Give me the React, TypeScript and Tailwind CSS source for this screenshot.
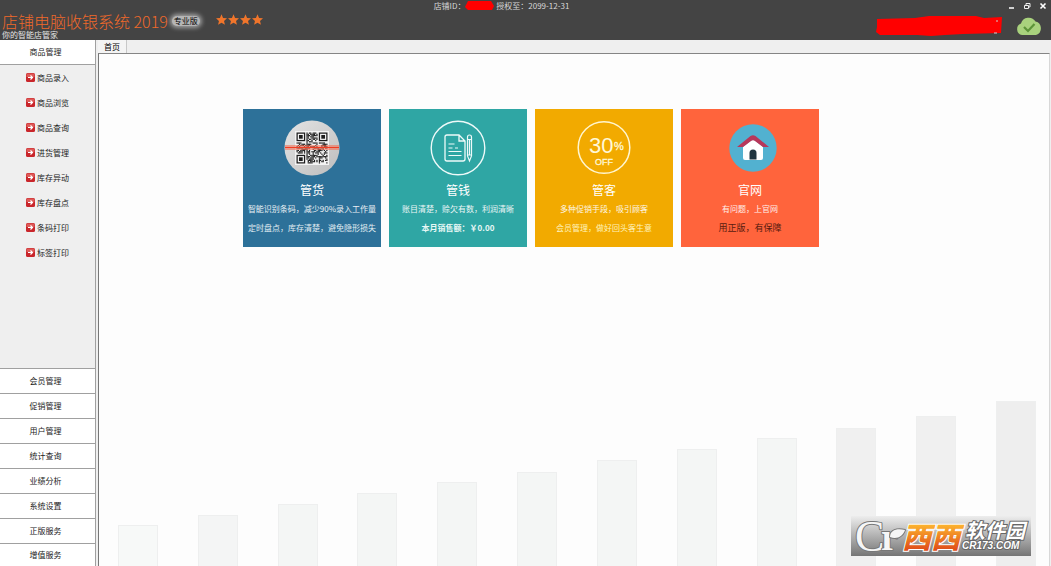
import { useState } from "react";

const goodsItems = [
  "商品录入",
  "商品浏览",
  "商品查询",
  "进货管理",
  "库存异动",
  "库存盘点",
  "条码打印",
  "标签打印",
];

const sections = [
  "会员管理",
  "促销管理",
  "用户管理",
  "统计查询",
  "业绩分析",
  "系统设置",
  "正版服务",
  "增值服务",
];

const bars = [
  { height: 41, color: "bg-[#f7f9f8]" },
  { height: 51, color: "bg-[#f4f5f5]" },
  { height: 62, color: "bg-[#f4f6f5]" },
  { height: 73, color: "bg-[#f4f6f5]" },
  { height: 84, color: "bg-[#f4f6f5]" },
  { height: 94, color: "bg-[#f4f6f5]" },
  { height: 106, color: "bg-[#f4f6f5]" },
  { height: 117, color: "bg-[#f4f6f5]" },
  { height: 128, color: "bg-[#f4f6f5]" },
  { height: 138, color: "bg-[#f0f0f0]" },
  { height: 150, color: "bg-[#f0f0f0]" },
  { height: 165, color: "bg-[#eeeeee]" },
];

const Star = () => (
  <svg width="11" height="11" viewBox="0 0 24 24" fill="#f0752b">
    <path d="M12 0.500l3.400 8 8.600.8-6.500 5.700 2 8.500L12 19l-7.500 4.500 2-8.500L0 9.300l8.600-.8z" />
  </svg>
);

const ArrowIcon = () => (
  <svg width="9" height="9" viewBox="0 0 18 18">
    <rect width="18" height="18" rx="3" fill="#c9262b" />
    <path d="M1 3a2 2 0 0 1 2-2h12a2 2 0 0 1 2 2v5H1z" fill="#de5a58" />
    <path d="M4 9h9M9 5l4 4-4 4" stroke="#fff" strokeWidth="2.400" fill="none" />
  </svg>
);

const isFinder = (x: number, y: number) =>
  (x < 8 && y < 8) || (x > 16 && y < 8) || (x < 8 && y > 16);

const QrIcon = () => {
  const cells = [];
  for (let y = 0; y < 25; y++) {
    for (let x = 0; x < 25; x++) {
      if (!isFinder(x, y) && (x * 7 + y * 13 + x * y * 5 + ((x * x) ^ (y * 3))) % 7 < 4) {
        cells.push(<rect key={`${x}-${y}`} x={x} y={y} width="1" height="1" />);
      }
    }
  }
  return (
    <svg width="56" height="56" viewBox="0 0 56 56">
      <defs>
        <linearGradient id="disc" x1="0" y1="0" x2="1" y2="1">
          <stop offset="0" stopColor="#e4e4e4" />
          <stop offset="1" stopColor="#bdbdbd" />
        </linearGradient>
      </defs>
      <circle cx="28" cy="28" r="27.500" fill="url(#disc)" />
      <rect x="11" y="11" width="34" height="34" fill="#f3f3f3" />
      <g transform="translate(12.500 12.500) scale(1.240)" fill="#1c1c1c">
        {cells}
        {[[0, 0], [18, 0], [0, 18]].map(([x, y]) => (
          <g key={`${x}-${y}`} transform={`translate(${x} ${y})`}>
            <rect width="7" height="7" />
            <rect x="1" y="1" width="5" height="5" fill="#f3f3f3" />
            <rect x="2" y="2" width="3" height="3" />
          </g>
        ))}
      </g>
      <rect x="1" y="25" width="54" height="5" fill="#f4694f" opacity=".55" />
      <rect x="1" y="27" width="54" height="1" fill="#f03c22" />
    </svg>
  );
};

const NoteIcon = () => (
  <svg width="56" height="56" viewBox="0 0 56 56" fill="none" stroke="#eefaf9">
    <circle cx="28" cy="28" r="26.800" strokeWidth="1.400" />
    <path d="M29 15H17a2 2 0 0 0-2 2v22a2 2 0 0 0 2 2h16a2 2 0 0 0 2-2V21zV21h6" strokeWidth="1.300" />
    <path d="M18.500 24h6M18.500 28h4M18.500 31.500h13M18.500 35.500h13M25 28h3" strokeWidth="1.200" />
    <path d="M37.500 17a1.800 1.800 0 0 1 4 0v19l-2 5-2-5zM37.500 19.500h4M37.500 35h4M39.500 20v15" strokeWidth="1.200" />
  </svg>
);

const DiscountIcon = () => (
  <svg width="56" height="56" viewBox="0 0 56 56" fill="#fff8d8" fontFamily="Liberation Sans, sans-serif">
    <circle cx="28" cy="27.500" r="25.800" fill="none" stroke="#fff6d0" strokeWidth="1.500" />
    <text x="13" y="33" fontSize="22">30</text>
    <text x="38" y="30" fontSize="11" stroke="#fff8d8" strokeWidth=".3">%</text>
    <text x="19" y="45" fontSize="9" stroke="#fff8d8" strokeWidth=".3">OFF</text>
  </svg>
);

const HouseIcon = () => (
  <svg width="56" height="56" viewBox="0 0 56 56">
    <circle cx="31" cy="28" r="23.700" fill="#52b1d0" />
    <path d="M21 27l10-8 10 8v11a2 2 0 0 1-2 2H23a2 2 0 0 1-2-2z" fill="#fff" />
    <path d="M15 27l13.500-11q2.500-1.500 5 0L47 27h-6l-8-6q-2-1.300-4 0l-8 6z" fill="#b8375a" />
    <path d="M27.500 39.500V33a3.500 3.500 0 0 1 7 0v6.500z" fill="#20343f" />
  </svg>
);

const cards = [
  {
    title: "管货",
    icon: <QrIcon />,
    color: "bg-[#2d7199]",
    lines: ["智能识别条码，减少90%录入工作量", "定时盘点，库存清楚，避免隐形损失"],
    note: "text-[8px] text-[#e0edf2]",
  },
  {
    title: "管钱",
    icon: <NoteIcon />,
    color: "bg-[#2fa6a4]",
    lines: ["账目清楚，赊欠有数，利润清晰", "本月销售额：￥0.00"],
    note: "text-[8px] text-[#e8f8f6] font-bold tabular-nums",
  },
  {
    title: "管客",
    icon: <DiscountIcon />,
    color: "bg-[#f2aa00]",
    lines: ["多种促销手段，吸引顾客", "会员管理，做好回头客生意"],
    note: "text-[8px] text-[#fff3bd]",
  },
  {
    title: "官网",
    icon: <HouseIcon />,
    color: "bg-[#ff643c]",
    lines: ["有问题，上官网", "用正版，有保障"],
    note: "text-[9px] text-[#5a1c10]",
  },
];

function Header() {
  return (
    <header className="grid h-10 grid-cols-[1fr_auto_1fr] bg-[#444444] text-white">
      <div className="flex flex-col pt-3 pl-[2px]">
        <div className="flex items-center">
          <h1 className="text-base leading-[18px] font-light text-[#f0692a]">店铺电脑收银系统 2019</h1>
          <span className="ml-1 rounded-full bg-[#b5b5b5] px-[2px] text-[8px] leading-[10px] text-black shadow-[0_0_4px_2px_#a0a0a0]">
            专业版
          </span>
          <span className="mb-1 ml-4 flex gap-px">
            <Star />
            <Star />
            <Star />
            <Star />
          </span>
        </div>
        <p className="text-[8px] leading-[9px] text-[#e6e6e6]">你的智能店管家</p>
      </div>
      <p className="flex h-3 items-center pr-12 text-[8px] text-[#d8d8d8]">
        店铺ID：
        <svg width="29" height="10" viewBox="0 0 29 10">
          <path d="M3 0h23l3 5-2 4H3L0 6z" fill="#f00" />
        </svg>
        &nbsp;授权至：2099-12-31
      </p>
      <div className="flex flex-col items-end pr-1">
        <div className="flex h-3 items-center gap-2">
          <button aria-label="最小化" className="h-2 w-2">
            <svg width="8" height="8"><path d="M2 6h5" stroke="#fff" strokeWidth="1.500" /></svg>
          </button>
          <button aria-label="还原" className="h-2 w-2">
            <svg width="8" height="8" fill="none" stroke="#eee"><path d="M1.500 3.500h4v3h-4zM3 3V1.500h4V5H6" /></svg>
          </button>
          <button aria-label="关闭" className="h-2 w-2">
            <svg width="8" height="8"><path d="M1.500 1.500l5 5m0-5l-5 5" stroke="#fff" strokeWidth="1.600" /></svg>
          </button>
        </div>
        <div className="flex items-center gap-3 pr-1">
          <svg width="128" height="22" viewBox="0 0 128 22">
            <path d="M2 4l38-1 14-2h47l8 2 18-1-1 16-38 1-18 1-14 1-14-1H5l-4-3 1-5z" fill="#f00" />
            <path d="M121 6h2M119 18h3" stroke="#cfcfcf" />
          </svg>
          <svg width="28" height="28" viewBox="0 0 28 28">
            <path d="M7 23a6 6 0 0 1-1-11.500A8 8 0 0 1 20.500 9.500 7 7 0 0 1 21 23z" fill="#a9d27d" />
            <path d="M9 15l4 4 6.500-7" fill="none" stroke="#5d9438" strokeWidth="2.200" />
          </svg>
        </div>
      </div>
    </header>
  );
}

function Sidebar() {
  const [active, setActive] = useState("商品管理");
  return (
    <nav className="flex w-24 shrink-0 flex-col border-r border-[#a0a0a0] bg-[#efefef] text-[8px] text-[#222222]">
      <button className="h-[25px] border-b border-[#a0a0a0] bg-white pr-1" onClick={() => setActive("商品管理")}>
        商品管理
      </button>
      {active === "商品管理" && (
        <ul>
          {goodsItems.map((item) => (
            <li key={item}>
              <button className="flex h-[25px] w-full items-center gap-[2px] pl-[26px]">
                <ArrowIcon />
                {item}
              </button>
            </li>
          ))}
        </ul>
      )}
      <div className="mt-auto flex flex-col">
        {sections.map((section) => (
          <button
            key={section}
            className="h-[25px] border-t border-[#a0a0a0] bg-white pr-1 last:h-[23px]"
            onClick={() => setActive(section)}
          >
            {section}
          </button>
        ))}
      </div>
    </nav>
  );
}

function Watermark() {
  return (
    <svg
      className="absolute right-[18px] bottom-[10px]"
      width="180"
      height="40"
      viewBox="0 0 180 40"
      fontFamily="Noto Sans CJK SC, sans-serif"
      fontWeight="bold"
    >
      <defs>
        <linearGradient id="plate" x2="0" y2="1">
          <stop offset="0" stopColor="#ededed" />
          <stop offset="1" stopColor="#757575" />
        </linearGradient>
        <linearGradient id="orange" x2="0" y2="1">
          <stop offset="0.200" stopColor="#ffbd30" />
          <stop offset="0.900" stopColor="#dd4518" />
        </linearGradient>
      </defs>
      <rect width="180" height="40" fill="url(#plate)" />
      <g fill="#f6f6f6" stroke="#777" strokeWidth="2" paintOrder="stroke" strokeLinejoin="round">
        <text x="4" y="35" fontSize="44" fontFamily="Liberation Serif, serif" fontWeight="normal">C</text>
        <text x="30" y="34" fontSize="38" fontFamily="Liberation Serif, serif">r</text>
        <path d="M39 21c0-7 7-9 15-7-2 6-8 10-15 7z" />
      </g>
      <g stroke="#fff" strokeWidth="2" paintOrder="stroke" fontStyle="italic">
        <text x="51" y="32" fontSize="29" fontWeight="900" fill="url(#orange)">西西</text>
      </g>
      <g fill="#fff" stroke="#666" strokeWidth="2" paintOrder="stroke" fontStyle="italic">
        <text x="114" y="22" fontSize="20">软件园</text>
        <text x="111" y="33" fontSize="10" fontFamily="Liberation Sans, sans-serif">CR173.COM</text>
      </g>
    </svg>
  );
}

export default function App() {
  return (
    <div className="flex min-h-screen flex-col bg-[#efefef] font-['Noto_Sans_CJK_SC',sans-serif]">
      <Header />
      <div className="flex grow">
        <Sidebar />
        <main className="flex grow flex-col pr-px pl-[2px]">
          <div className="flex h-[13px]" role="tablist">
            <button role="tab" aria-selected="true" className="w-[29px] border-r border-[#c8c8c8] bg-[#f4f4f4] text-[8px] leading-3 text-black">
              首页
            </button>
          </div>
          <div className="relative flex grow flex-col border-t border-r border-l border-t-[#858585] border-r-[#d8d8d8] border-l-[#777777] bg-[#fdfdfd]">
            <div className="flex justify-center gap-2 pt-[55px] pr-[86px]">
              {cards.map((card) => (
                <a key={card.title} href="#" className={`flex h-[138px] w-[138px] flex-col items-center pt-[11px] whitespace-nowrap text-white ${card.color}`}>
                  {card.icon}
                  <h2 className="mt-1 text-xs leading-5">{card.title}</h2>
                  <p className="text-[8px] leading-[18px] opacity-90">{card.lines[0]}</p>
                  <p className={`leading-5 ${card.note}`}>{card.lines[1]}</p>
                </a>
              ))}
            </div>
            <div className="mt-auto flex items-end justify-between pr-[13px] pl-[19px]">
              {bars.map((bar) => (
                <div key={bar.height} className={`w-10 border border-b-0 border-[#eeefef] ${bar.color}`} style={{ height: bar.height }} />
              ))}
            </div>
            <Watermark />
          </div>
        </main>
      </div>
    </div>
  );
}
